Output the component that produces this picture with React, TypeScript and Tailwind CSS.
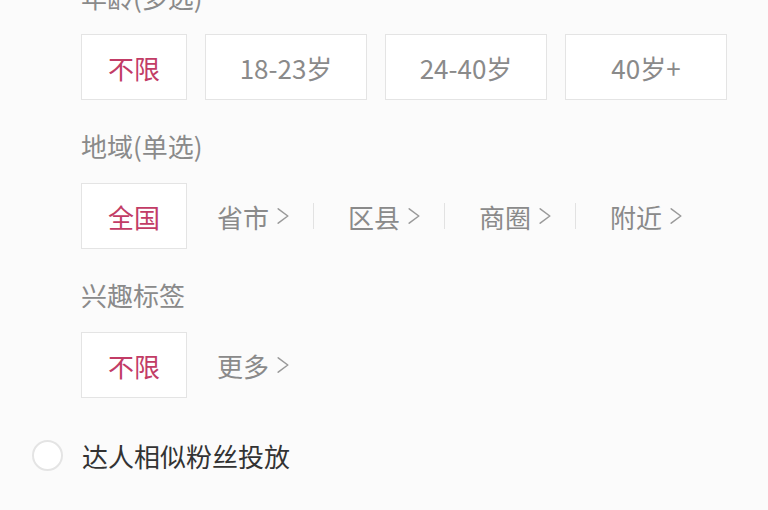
import React from "react"

const font = { fontFamily: '"Noto Sans CJK SC", "Noto Sans", sans-serif' }

function Chevron() {
  return (
    <svg className="ml-[8px] h-[16px] w-[12px]" viewBox="0 0 12 16" fill="none">
      <path d="M1.2 0.8l9.6 7.2-9.6 7.2" stroke="#9a9a9a" strokeWidth={1.5} strokeLinecap="round" strokeLinejoin="round" />
    </svg>
  )
}

function Option({ label, active, wide }: { label: string; active?: boolean; wide?: boolean }) {
  return (
    <div
      className={`flex h-[66px] items-center justify-center border border-[#e4e4e4] bg-white text-[26px] ${
        wide ? "w-[162px]" : "w-[106px]"
      } ${active ? "text-[#c23c66]" : "text-[#8a8a8a]"}`}
    >
      {label}
    </div>
  )
}

function Link({ label }: { label: string }) {
  return (
    <div className="flex items-center text-[26px] text-[#8a8a8a]">
      {label}
      <Chevron />
    </div>
  )
}

function Divider() {
  return <div className="ml-[24px] mr-[34px] h-[26px] w-px bg-[#e2e2e2]" />
}

function Label({ children }: { children: React.ReactNode }) {
  return <div className="h-[30px] text-[26px] leading-[30px] text-[#8a8a8a]">{children}</div>
}

export default function App() {
  const regions = ["省市", "区县", "商圈", "附近"]

  return (
    <div className="h-[510px] w-[768px] overflow-hidden bg-[#fbfbfb]" style={font}>
      <div className="-mt-[18px] pl-[81px]">
        {/* 年龄 */}
        <Label>年龄(多选)</Label>
        <div className="mt-[22px] flex gap-[18px]">
          <Option label="不限" active />
          <Option label="18-23岁" wide />
          <Option label="24-40岁" wide />
          <Option label="40岁+" wide />
        </div>

        {/* 地域 */}
        <div className="mt-[31px]">
          <Label>地域(单选)</Label>
        </div>
        <div className="mt-[22px] flex items-center">
          <Option label="全国" active />
          <div className="ml-[30px] flex items-center">
            {regions.map((r, i) => (
              <React.Fragment key={r}>
                {i > 0 && <Divider />}
                <Link label={r} />
              </React.Fragment>
            ))}
          </div>
        </div>

        {/* 兴趣标签 */}
        <div className="mt-[31px]">
          <Label>兴趣标签</Label>
        </div>
        <div className="mt-[22px] flex items-center">
          <Option label="不限" active />
          <div className="ml-[30px]">
            <Link label="更多" />
          </div>
        </div>
      </div>

      {/* 达人相似粉丝投放 */}
      <div className="mt-[41px] flex h-[32px] items-center pl-[32px]">
        <div className="h-[31px] w-[31px] rounded-full border-2 border-[#e4e4e4] bg-white" />
        <div className="ml-[19px] text-[26px] text-[#333333]">达人相似粉丝投放</div>
      </div>
    </div>
  )
}
